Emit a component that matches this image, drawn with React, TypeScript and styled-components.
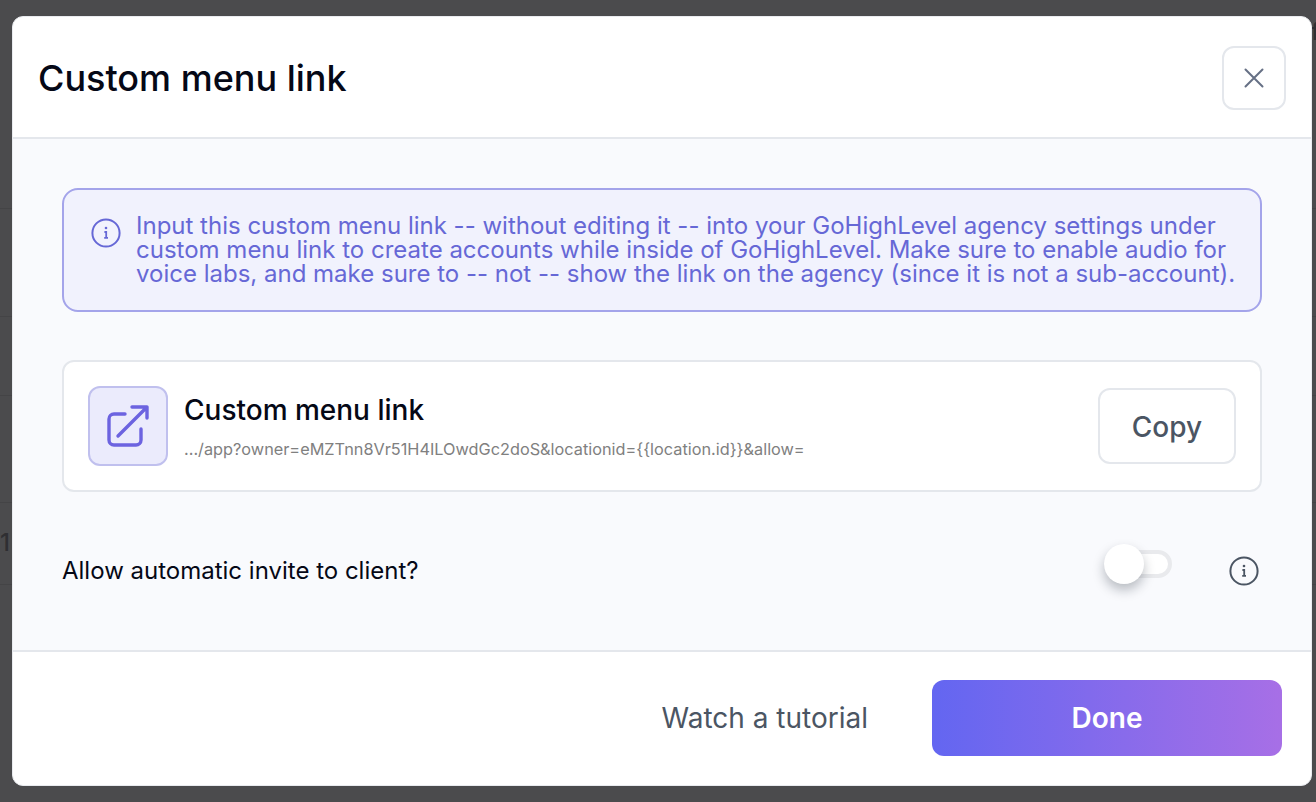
import React from "react";
import styled, { createGlobalStyle } from "styled-components";

const Global = createGlobalStyle`
  html, body { margin: 0; padding: 0; height: 100%; }
  body { font-family: Inter, "Liberation Sans", sans-serif; background: #4b4b4d; overflow: hidden; }
  * { box-sizing: border-box; }
`;

const rule = (y: number) =>
  `linear-gradient(#444446, #444446) 0 ${y}px / 100% 1px no-repeat`;

const Backdrop = styled.div`
  position: relative;
  width: 1316px;
  height: 802px;
  padding: 16px 4px 16px 12px;
  background: ${[208, 316, 395, 502, 584].map(rule).join(", ")}, #4b4b4d;
`;

const PageGlyph = styled.span<{ $left: number; $top: number }>`
  position: absolute;
  left: ${(p) => p.$left}px;
  top: ${(p) => p.$top}px;
  font-size: 24px;
  line-height: 32px;
  font-weight: 500;
  color: #2f2f32;
`;

const Dialog = styled.div`
  position: relative;
  width: 1300px;
  height: 770px;
  display: flex;
  flex-direction: column;
  background: #fff;
  border: 1px solid #e9ebef;
  border-radius: 11px;
  overflow: hidden;
`;

const Header = styled.header`
  height: 122px;
  flex: none;
  display: flex;
  align-items: center;
  justify-content: space-between;
  padding: 2px 25px 0;
  border-bottom: 2px solid #e4e7ec;
`;

const Title = styled.h2`
  margin: 0;
  font-size: 36px;
  line-height: 44px;
  font-weight: 500;
  color: #050816;
`;

const OutlineButton = styled.button`
  display: flex;
  align-items: center;
  justify-content: center;
  background: #fff;
  border: 2px solid #e4e7ec;
  border-radius: 12px;
  font-family: inherit;
  padding: 0;
`;

const CloseButton = styled(OutlineButton)`
  width: 64px;
  height: 64px;
  color: #667085;
`;

const Body = styled.main`
  flex: 1;
  display: flex;
  flex-direction: column;
  gap: 48px;
  padding: 49px 49px 0;
  background: #f9fafd;
  border-bottom: 2px solid #e4e7ec;
`;

const Alert = styled.div`
  height: 124px;
  flex: none;
  display: flex;
  align-items: flex-start;
  gap: 14px;
  padding: 24px 20px 0 26px;
  background: #f1f2fd;
  border: 2px solid #a4a4ea;
  border-radius: 16px;
  color: #6668d6;
`;

const AlertIcon = styled.svg`
  width: 32px;
  height: 32px;
  flex: none;
  margin-top: 3px;
`;

const AlertText = styled.p`
  margin: 0;
  font-size: 24px;
  line-height: 24px;
  font-weight: 400;
`;

const Card = styled.section`
  height: 132px;
  flex: none;
  display: flex;
  align-items: center;
  padding: 0 24px;
  background: #fff;
  border: 2px solid #e4e7ec;
  border-radius: 12px;
`;

const IconBox = styled.div`
  width: 80px;
  height: 80px;
  flex: none;
  display: flex;
  align-items: center;
  justify-content: center;
  background: #ebebfc;
  border: 2px solid #c0c0ee;
  border-radius: 12px;
  color: #6c63e0;
`;

const CardText = styled.div`
  flex: 1;
  margin-left: 16px;
  display: flex;
  flex-direction: column;
  gap: 13px;
`;

const CardTitle = styled.div`
  font-size: 28px;
  line-height: 32px;
  font-weight: 500;
  color: #050816;
`;

const CardLink = styled.div`
  font-size: 16.3px;
  line-height: 20px;
  color: #808080;
`;

const CopyButton = styled(OutlineButton)`
  width: 138px;
  height: 76px;
  padding-top: 2px;
  font-size: 28px;
  font-weight: 500;
  color: #4b5563;
`;

const ToggleRow = styled.div`
  display: flex;
  align-items: center;
  height: 40px;
  margin-top: 10px;
`;

const ToggleLabel = styled.span`
  flex: 1;
  font-size: 24px;
  font-weight: 400;
  color: #050816;
`;

const Toggle = styled.div`
  position: relative;
  width: 68px;
  height: 28px;
  margin-bottom: 12px;
  background: #fff;
  border: 4px solid #e9eaed;
  border-radius: 14px;
`;

const Thumb = styled.div`
  position: absolute;
  left: -4px;
  top: -10px;
  width: 40px;
  height: 40px;
  border-radius: 50%;
  background: #fff;
  box-shadow: 0 6px 12px rgba(16, 24, 40, 0.28);
`;

const HelpIcon = styled.svg`
  width: 32px;
  height: 32px;
  margin: 2px 2px 0 56px;
  color: #4b5563;
`;

const Footer = styled.footer`
  height: 133px;
  flex: none;
  display: flex;
  align-items: center;
  justify-content: flex-end;
  gap: 64px;
  padding: 0 29px 2px 0;
`;

const TutorialLink = styled.a`
  font-size: 28px;
  font-weight: 400;
  color: #4b5563;
`;

const DoneButton = styled.button`
  width: 350px;
  height: 76px;
  border: 0;
  border-radius: 12px;
  background: linear-gradient(90deg, #6366f1 0%, #a76fe6 100%);
  color: #fff;
  font-family: inherit;
  font-size: 28px;
  font-weight: 600;
`;

const InfoGlyph = () => (
  <>
    <circle cx="16" cy="16" r="13.6" fill="none" stroke="currentColor" strokeWidth="2" />
    <circle cx="16" cy="11" r="1.3" fill="currentColor" />
    <path d="M14.4 15h1.8v5.6M14.2 20.8h3.8" fill="none" stroke="currentColor" strokeWidth="1.8" />
  </>
);

export default function App() {
  return (
    <Backdrop>
      <Global />
      <PageGlyph $left={0} $top={527}>1</PageGlyph>
      <PageGlyph $left={1311} $top={16}>f</PageGlyph>
      <Dialog>
        <Header>
          <Title>Custom menu link</Title>
          <CloseButton aria-label="Close">
            <svg width="32" height="32" viewBox="0 0 32 32" fill="none" stroke="currentColor" strokeWidth="2" strokeLinecap="round">
              <path d="M7.5 7.5l17 17M24.5 7.5l-17 17" />
            </svg>
          </CloseButton>
        </Header>
        <Body>
          <Alert>
            <AlertIcon viewBox="0 0 32 32"><InfoGlyph /></AlertIcon>
            <AlertText>
              Input this custom menu link -- without editing it -- into your GoHighLevel agency settings under custom menu link to create accounts while inside of GoHighLevel. Make sure to enable audio for voice labs, and make sure to -- not -- show the link on the agency (since it is not a sub-account).
            </AlertText>
          </Alert>
          <Card>
            <IconBox>
              <svg width="48" height="48" viewBox="0 0 48 48" fill="none" stroke="currentColor" strokeWidth="3.4" strokeLinecap="round" strokeLinejoin="round">
                <path d="M21 12H10a5 5 0 0 0-5 5v21a5 5 0 0 0 5 5h22a5 5 0 0 0 5-5V27" />
                <path d="M14 34L43 5M28 5H43V16" />
              </svg>
            </IconBox>
            <CardText>
              <CardTitle>Custom menu link</CardTitle>
              <CardLink>.../app?owner=eMZTnn8Vr51H4ILOwdGc2doS&amp;locationid={"{{location.id}}"}&amp;allow=</CardLink>
            </CardText>
            <CopyButton>Copy</CopyButton>
          </Card>
          <ToggleRow>
            <ToggleLabel>Allow automatic invite to client?</ToggleLabel>
            <Toggle><Thumb /></Toggle>
            <HelpIcon viewBox="0 0 32 32"><InfoGlyph /></HelpIcon>
          </ToggleRow>
        </Body>
        <Footer>
          <TutorialLink>Watch a tutorial</TutorialLink>
          <DoneButton>Done</DoneButton>
        </Footer>
      </Dialog>
    </Backdrop>
  );
}
